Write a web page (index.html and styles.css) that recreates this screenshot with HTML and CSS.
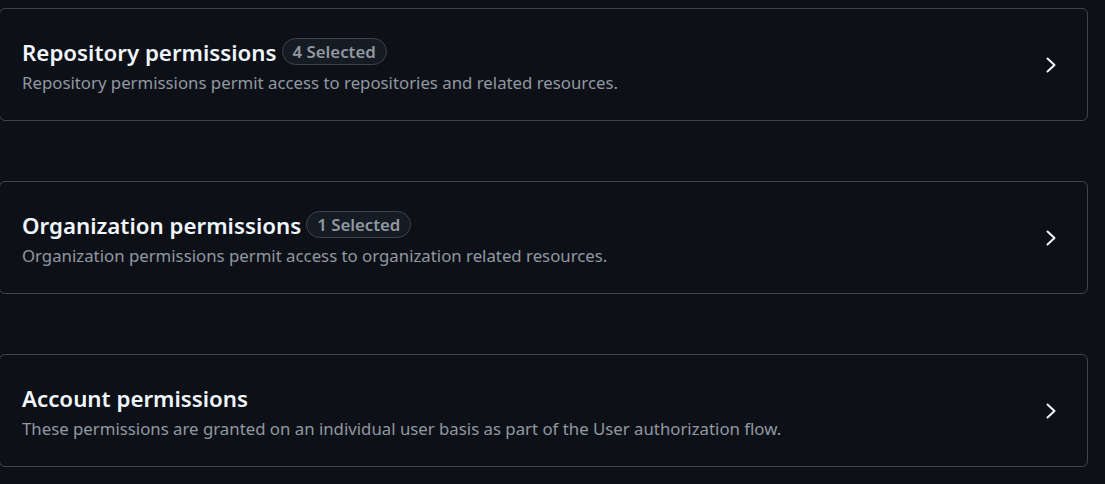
FILE: index.html
```html
<!DOCTYPE html>
<html>
<head>
<meta charset="utf-8">
<link rel="stylesheet" href="styles.css">
</head>
<body>
<div class="list">
  <div class="card">
    <div class="info">
      <div class="title-row">
        <span class="title">Repository permissions</span>
        <span class="badge">4 Selected</span>
      </div>
      <div class="desc">Repository permissions permit access to repositories and related resources.</div>
    </div>
    <svg class="chev" width="20" height="20" viewBox="0 0 20 20"><polyline points="5.5,3.5 12.5,10 5.5,16.5" fill="none" stroke="currentColor" stroke-width="2" stroke-linecap="round" stroke-linejoin="round"/></svg>
  </div>
  <div class="card">
    <div class="info">
      <div class="title-row">
        <span class="title">Organization permissions</span>
        <span class="badge">1 Selected</span>
      </div>
      <div class="desc">Organization permissions permit access to organization related resources.</div>
    </div>
    <svg class="chev" width="20" height="20" viewBox="0 0 20 20"><polyline points="5.5,3.5 12.5,10 5.5,16.5" fill="none" stroke="currentColor" stroke-width="2" stroke-linecap="round" stroke-linejoin="round"/></svg>
  </div>
  <div class="card">
    <div class="info">
      <div class="title-row">
        <span class="title">Account permissions</span>
      </div>
      <div class="desc">These permissions are granted on an individual user basis as part of the User authorization flow.</div>
    </div>
    <svg class="chev" width="20" height="20" viewBox="0 0 20 20"><polyline points="5.5,3.5 12.5,10 5.5,16.5" fill="none" stroke="currentColor" stroke-width="2" stroke-linecap="round" stroke-linejoin="round"/></svg>
  </div>
</div>
</body>
</html>
```
FILE: styles.css
```css
html, body {
  margin: 0;
  padding: 0;
  background: #0d1117;
  height: 100%;
  overflow: hidden;
}
body {
  font-family: "Noto Sans", "Open Sans", sans-serif;
  color: #f0f6fc;
}
.list {
  display: flex;
  flex-direction: column;
  gap: 60px;
  padding: 8px 17px 0 0;
  margin-left: -1px;
}
.card {
  height: 113px;
  box-sizing: border-box;
  border: 1px solid #3d444d;
  border-radius: 6px;
  display: flex;
  align-items: center;
  padding: 0 25px 0 22px;
}
.info {
  flex: 1;
  display: flex;
  flex-direction: column;
  gap: 3px;
  padding-top: 4px;
}
.title-row {
  display: flex;
  align-items: center;
  gap: 5px;
  height: 30px;
}
.title {
  font-size: 22.3px;
  line-height: 30px;
  font-weight: 600;
  color: #f0f6fc;
}
.badge {
  display: inline-flex;
  align-items: center;
  height: 27px;
  box-sizing: border-box;
  padding: 0 10px;
  border: 1px solid #3d444d;
  border-radius: 14px;
  background: #151b23;
  color: #9198a1;
  font-size: 16.8px;
  font-weight: 600;
  position: relative;
  top: -2px;
}
.desc {
  font-size: 16.8px;
  line-height: 24px;
  color: #9198a1;
}
.chev {
  color: #f0f6fc;
  flex: none;
}
```
